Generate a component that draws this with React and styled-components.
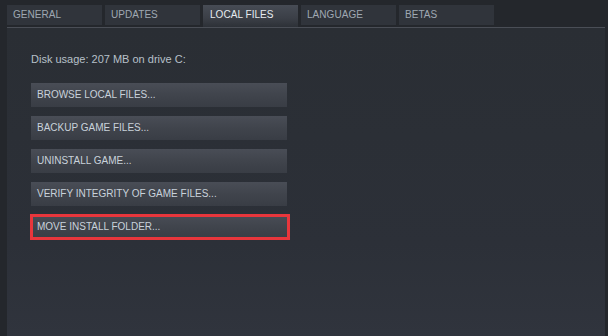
import React from 'react';
import styled, { createGlobalStyle } from 'styled-components';

const GlobalStyle = createGlobalStyle`
  html, body {
    margin: 0;
    padding: 0;
    background: #24272c;
    font-family: Arial, "Liberation Sans", sans-serif;
  }
`

const Page = styled.div`
  width: 608px;
  height: 336px;
  box-sizing: border-box;
  padding: 5px 3px 0 7px;
  display: flex;
  flex-direction: column;
  background: #24272c;
`

const TabBar = styled.div`
  display: flex;
  gap: 3px;
  height: 22px;
  border-bottom: 1px solid #4a4e56;
  align-items: flex-start;
`

const Tab = styled.div`
  width: 95px;
  height: ${p => (p.active ? '22px' : '20px')};
  box-sizing: border-box;
  padding: 4px 0 0 ${p => (p.active ? '7px' : '6px')};
  font-size: 10px;
  letter-spacing: 0.05px;
  color: ${p => (p.active ? '#e6ebef' : '#9fa8b2')};
  background: ${p =>
    p.active
      ? 'linear-gradient(to bottom, #474c55 0%, #3b3f47 60%, #2d3137 100%)'
      : '#30343b'};
`

const Panel = styled.div`
  flex: 1;
  padding: 25px 0 0 24px;
  display: flex;
  flex-direction: column;
  background: linear-gradient(to bottom, #2a2e34 0%, #2c3038 70%, #30343d 100%);
`

const DiskUsage = styled.div`
  font-size: 11px;
  line-height: 13px;
  color: #b7c0c9;
  margin-bottom: 17px;
`

const ButtonList = styled.div`
  display: flex;
  flex-direction: column;
  gap: 9px;
`

const ActionButton = styled.div`
  position: relative;
  width: 256px;
  height: 24px;
  box-sizing: border-box;
  padding: 6px 0 0 6px;
  font-size: 10px;
  color: #c9d2db;
  background: linear-gradient(to bottom, #494d56 0%, #40444c 50%, #393d45 100%);

  ${p =>
    p.highlighted &&
    `
    &::after {
      content: '';
      position: absolute;
      left: -1px;
      top: -1px;
      width: 260px;
      height: 26px;
      box-sizing: border-box;
      border: 3px solid #e8363c;
    }
  `}
`

const tabs = ['GENERAL', 'UPDATES', 'LOCAL FILES', 'LANGUAGE', 'BETAS']

const actions = [
  'BROWSE LOCAL FILES...',
  'BACKUP GAME FILES...',
  'UNINSTALL GAME...',
  'VERIFY INTEGRITY OF GAME FILES...',
  'MOVE INSTALL FOLDER...',
]

const App = () => {
  return (
    <>
      <GlobalStyle />
      <Page>
        <TabBar>
          {tabs.map(t => (
            <Tab key={t} active={t === 'LOCAL FILES'}>{t}</Tab>
          ))}
        </TabBar>
        <Panel>
          <DiskUsage>Disk usage: 207 MB on drive C:</DiskUsage>
          <ButtonList>
            {actions.map(a => (
              <ActionButton key={a} highlighted={a === 'MOVE INSTALL FOLDER...'}>
                {a}
              </ActionButton>
            ))}
          </ButtonList>
        </Panel>
      </Page>
    </>
  )
}

export default App;
